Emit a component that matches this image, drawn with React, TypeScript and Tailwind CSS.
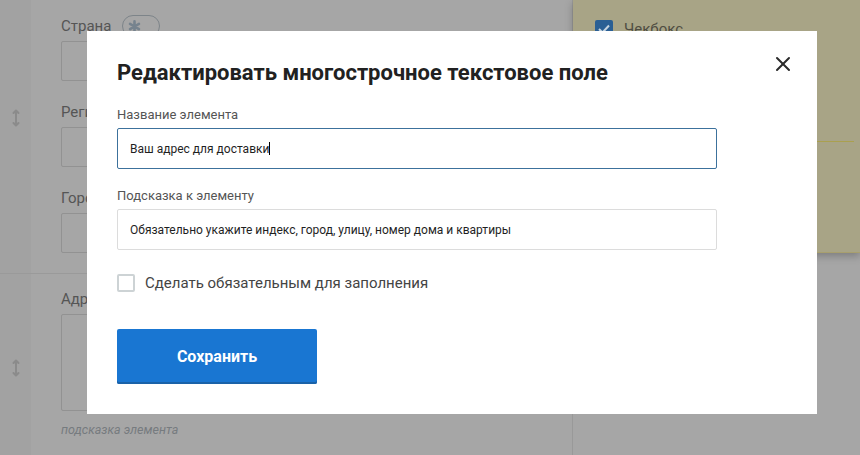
import React from "react";
import { X } from "lucide-react";

const font = { fontFamily: "Roboto, 'Liberation Sans', sans-serif" };

function Handle() {
  return (
    <svg width="10" height="20" viewBox="0 0 10 20" fill="none" stroke="#8b8b8b" strokeWidth="2" strokeLinecap="round" strokeLinejoin="round">
      <path d="M5 3v14M2.5 5L5 2.5 7.5 5M2.5 15L5 17.5 7.5 15" />
    </svg>
  );
}

function BgField({ label, badge, h = "h-[40px]" }: { label: string; badge?: boolean; h?: string }) {
  return (
    <div className="flex flex-col">
      <div className="flex items-center gap-[11px] h-[20px] text-[15px] leading-[22px] text-[#555555]">
        <span>{label}</span>
        {badge && (
          <span className="flex items-center shrink-0 w-[38px] h-[22px] pl-[5px] rounded-full border border-[#7d8489]">
            <svg width="13" height="13" viewBox="0 0 14 14" fill="none" stroke="#76838e" strokeWidth="2.8" strokeLinecap="round">
              <path d="M7 1.5v11M2.2 4.2l9.6 5.6M11.8 4.2l-9.6 5.6" />
            </svg>
          </span>
        )}
      </div>
      <div className={`mt-[5px] w-[300px] ${h} rounded-[2px] border border-[#929292] bg-[#a6a6a6]`} />
    </div>
  );
}

export default function App() {
  return (
    <div className="relative w-[860px] h-[455px] overflow-hidden bg-[#a6a6a6]" style={font}>
      <div className="flex h-full">
        <div className="w-[573px] shrink-0 border-r border-[#999999] flex flex-col">
          <div className="flex h-[274px] border-b border-[#9a9a9a]">
            <div className="w-[31px] shrink-0 bg-[#a2a2a2] flex items-center justify-center pb-[38px]">
              <Handle />
            </div>
            <div className="pl-[30px] pt-[16px] flex flex-col gap-[21px]">
              <BgField label="Страна" badge />
              <BgField label="Регион" />
              <BgField label="Город" />
            </div>
          </div>
          <div className="flex flex-1">
            <div className="w-[31px] shrink-0 bg-[#a2a2a2] flex items-start justify-center pt-[84px]">
              <Handle />
            </div>
            <div className="pl-[30px] pt-[15px] flex flex-col">
              <BgField label="Адрес" h="h-[97px]" />
              <div className="mt-[11px] text-[12.5px] leading-[16px] italic text-[#767b7f]">подсказка элемента</div>
            </div>
          </div>
        </div>
        <div className="flex-1 h-[253px] bg-[#a8a486] border-b border-[#a89f6e] shadow-[0_3px_8px_rgba(0,0,0,0.25)] flex flex-col pl-[22px] pt-[20px]">
          <div className="flex items-center gap-[11px] h-[18px]">
            <span className="flex items-center justify-center w-[18px] h-[18px] rounded-[2px] bg-[#2a5f94]">
              <svg width="12" height="10" viewBox="0 0 12 10" fill="none" stroke="#c5d3df" strokeWidth="2">
                <path d="M1 5l3.5 3.5L11 1.5" />
              </svg>
            </span>
            <span className="text-[15px] text-[#4f4d42]">Чекбокс</span>
          </div>
          <div className="mt-[103px] mr-[6px] h-px bg-[#aaa04f]" />
        </div>
      </div>

      <div className="absolute left-[87px] top-[31px] w-[730px] h-[383px] bg-white pl-[30px] pt-[28px]">
        <button className="absolute right-[22px] top-[21px] text-[#2b2b2b]">
          <X size={24} strokeWidth={2} absoluteStrokeWidth />
        </button>
        <h2 className="text-[22px] leading-[28px] font-bold text-[#212121]">
          Редактировать многострочное текстовое поле
        </h2>
        <div className="mt-[20px] text-[13px] leading-[16px] text-[#555555]">Название элемента</div>
        <div className="mt-[5px] w-[600px] h-[41px] rounded-[2px] border border-[#3c719c] flex items-center pl-[12px] text-[12px] text-[#1f1f1f]">
          Ваш адрес для доставки
          <span className="inline-block w-px h-[13px] bg-black" />
        </div>
        <div className="mt-[19px] text-[13px] leading-[16px] text-[#555555]">Подсказка к элементу</div>
        <div className="mt-[5px] w-[600px] h-[41px] rounded-[2px] border border-[#dcdcdc] flex items-center pl-[12px] text-[12px] text-[#1f1f1f]">
          Обязательно укажите индекс, город, улицу, номер дома и квартиры
        </div>
        <label className="mt-[24px] flex items-center gap-[10px] h-[18px]">
          <span className="w-[18px] h-[18px] rounded-[2px] border-2 border-[#cdd3d5] bg-white" />
          <span className="text-[15px] leading-[18px] text-[#444444]">Сделать обязательным для заполнения</span>
        </label>
        <button className="mt-[37px] block w-[200px] h-[55px] pt-[1px] rounded-[2px] bg-[#1976d2] shadow-[inset_0_-2px_0_#1a62a8] text-white text-[16px] font-bold">
          Сохранить
        </button>
      </div>
    </div>
  );
}
